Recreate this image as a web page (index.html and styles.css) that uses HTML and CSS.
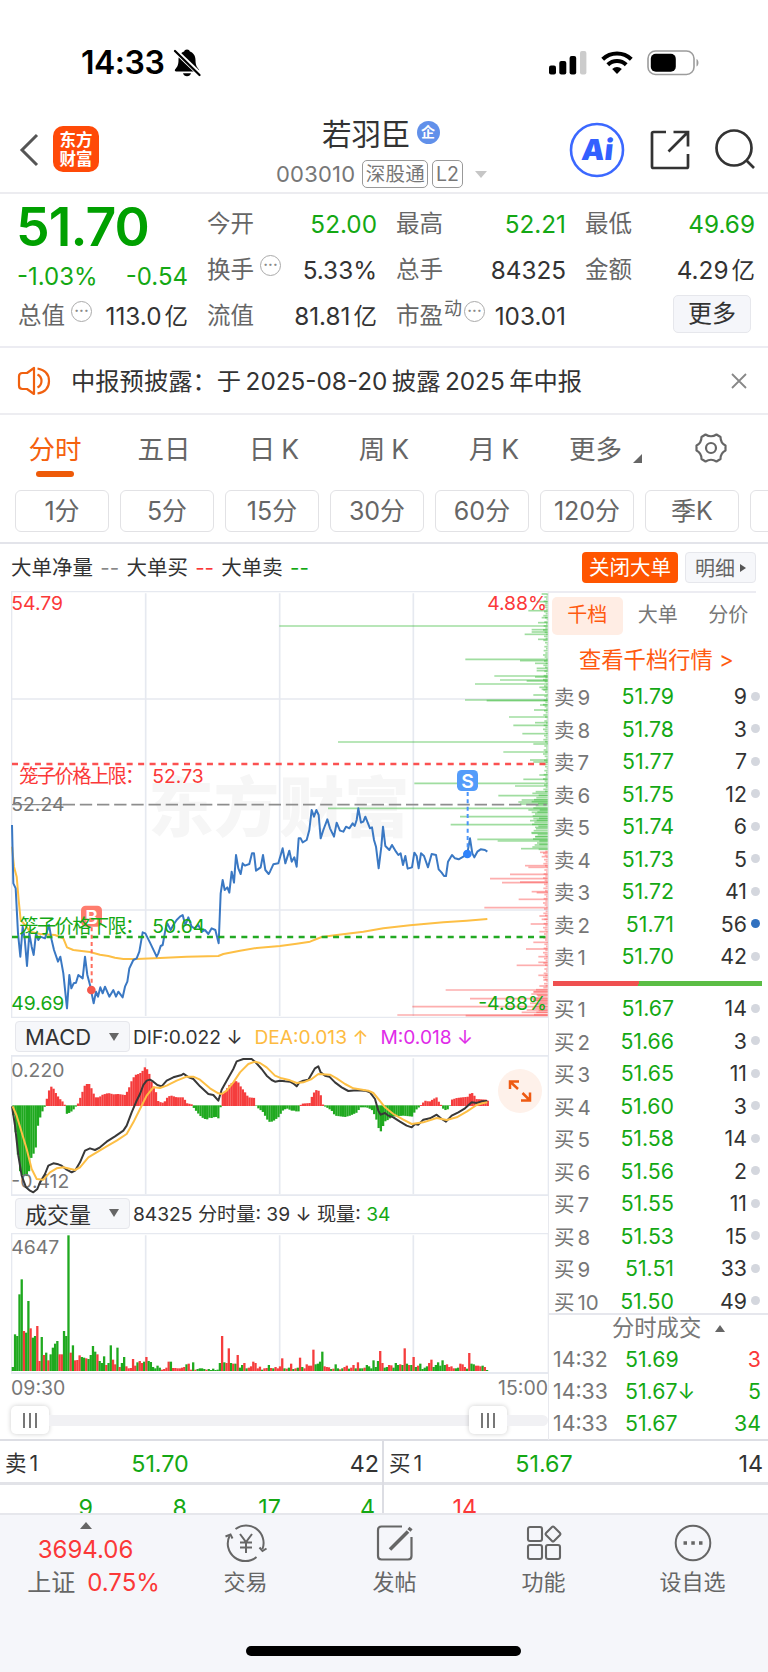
FILE: index.html
```html
<!DOCTYPE html>
<html lang="zh-CN">
<head>
    <meta charset="UTF-8">
    <meta name="viewport" content="width=device-width, initial-scale=1.0">
    <title>若羽臣 003010</title>
    <link rel="stylesheet" href="styles.css">
</head>
<body>
    <div class="status-bar">
        <span class="clock">14:33</span>
        <svg class="bell" width="28" height="30" viewBox="0 0 28 30">
            <path d="M14 1.5c-1.600 0-2.600.9-2.900 2C7.500 4.700 5.500 8 5.500 12c0 5-1.300 7-3.300 9.200-.8 1-.3 2.300 1 2.300h21.600c1.300 0 1.800-1.300 1-2.300-2-2.200-3.300-4.200-3.300-9.200 0-4-2-7.300-5.600-8.500-.3-1.100-1.300-2-2.900-2z"/>
            <path d="M10 25.300h8c-.5 1.900-2 3-4 3s-3.500-1.100-4-3z"/>
            <path d="M2.500 3l24 23" stroke="#fff" stroke-width="5"/>
            <path d="M2 3l24.500 24" stroke="#000" stroke-width="2.200" stroke-linecap="round"/>
        </svg>
        <div class="status-icons">
            <svg width="38" height="25" viewBox="0 0 38 25">
                <rect x="0" y="15.500" width="7" height="9" rx="2"/>
                <rect x="10.300" y="11" width="7" height="13.500" rx="2"/>
                <rect x="20.600" y="6" width="6.600" height="18.500" rx="2"/>
                <rect x="31" y="1" width="6.400" height="23.500" rx="2" fill="#ccc"/>
            </svg>
            <svg width="32" height="25" viewBox="0 0 32 25" fill="none" stroke="#000" stroke-width="4">
                <path d="M1.700 9.300a20.500 20.500 0 0 1 28.600 0"/>
                <path d="M6.800 14.800a13.200 13.200 0 0 1 18.400 0"/>
                <path d="M16 24l-4.800-5a7 7 0 0 1 9.600 0z" fill="#000" stroke="none"/>
            </svg>
            <svg width="54" height="26" viewBox="0 0 54 26">
                <rect x="1" y="1" width="46" height="23.500" rx="7.500" fill="none" stroke="#9c9c9c" stroke-width="1.600"/>
                <rect x="3.800" y="3.800" width="25" height="18" rx="5"/>
                <path d="M49.500 9c2.600 1 2.600 6.500 0 7.500z" fill="#9c9c9c"/>
            </svg>
        </div>
    </div>

    <header>
        <svg class="back" width="20" height="36" viewBox="0 0 20 36"><path d="M18 3L3 18l15 15" fill="none" stroke="#555" stroke-width="3"/></svg>
        <div class="logo">东方<br>财富</div>
        <div class="stock">
            <div class="stock-name">若羽臣<span class="badge">企</span></div>
            <div class="stock-code">003010<span class="tag">深股通</span><span class="tag">L2</span><i class="caret"></i></div>
        </div>
        <div class="head-icons">
            <svg width="56" height="56" viewBox="0 0 56 56">
                <circle cx="28" cy="28" r="26" fill="none" stroke="#3b68ff" stroke-width="2.600"/>
                <text x="27.500" y="38" text-anchor="middle" class="ai-text" transform="skewX(-6) translate(4 0)">Ai</text>
            </svg>
            <svg class="share" width="42" height="42" viewBox="0 0 42 42" fill="none" stroke="#333" stroke-width="2.700">
                <path d="M17 3H4.500Q3 3 3 4.500v33Q3 39 4.500 39h33q1.500 0 1.500-1.500V25"/>
                <path d="M24.500 3H39v14.500M39 3L19.500 22.500"/>
            </svg>
            <svg class="search" width="42" height="42" viewBox="0 0 42 42" fill="none" stroke="#333" stroke-width="2.700">
                <circle cx="20" cy="19" r="17.500"/>
                <path d="M32.500 31.500l7.500 7.500"/>
            </svg>
        </div>
    </header>

    <section class="quote">
        <div class="quote-main">
            <div class="price">51.70</div>
            <div class="change"><span>-1.03%</span><span>-0.54</span></div>
            <div class="cell"><span>总值<i class="more-dot">···</i></span><b>113.0<em>亿</em></b></div>
        </div>
        <div class="quote-col">
            <div class="cell"><span>今开</span><b class="green">52.00</b></div>
            <div class="cell"><span>换手<i class="more-dot">···</i></span><b>5.33%</b></div>
            <div class="cell"><span>流值</span><b>81.81<em>亿</em></b></div>
        </div>
        <div class="quote-col">
            <div class="cell"><span>最高</span><b class="green">52.21</b></div>
            <div class="cell"><span>总手</span><b>84325</b></div>
            <div class="cell"><span>市盈<sup>动</sup><i class="more-dot tight">···</i></span><b>103.01</b></div>
        </div>
        <div class="quote-col">
            <div class="cell"><span>最低</span><b class="green">49.69</b></div>
            <div class="cell"><span>金额</span><b>4.29<em>亿</em></b></div>
            <div class="more-btn">更多</div>
        </div>
    </section>

    <section class="notice">
        <svg width="36" height="30" viewBox="0 0 36 30" fill="none" stroke="#f0600f" stroke-width="2.200" stroke-linejoin="round">
            <path d="M17 2v26l-7-5H5.500Q2 23 2 19.500v-9Q2 7 5.500 7H10z"/>
            <path d="M20.500 8.500q4 2 4 6.500t-4 6.500M20.500 2.500q11.500 2 11.500 12.500t-11.500 12.500" />
        </svg>
        <p>中报预披露：于<i></i>2025-08-20<i></i>披露<i></i>2025<i></i>年中报</p>
        <svg width="18" height="18" viewBox="0 0 18 18" fill="none" stroke="#888" stroke-width="1.800"><path d="M2 2l14 14M16 2L2 16"/></svg>
    </section>

    <nav class="tabs">
        <span class="tab active">分时</span>
        <span class="tab">五日</span>
        <span class="tab">日<i></i>K</span>
        <span class="tab">周<i></i>K</span>
        <span class="tab">月<i></i>K</span>
        <span class="tab tab-more">更多<svg width="9" height="9" viewBox="0 0 9 9"><path d="M9 0v9H0z" fill="#666"/></svg></span>
        <svg class="gear" width="34" height="34" viewBox="0 0 34 34" fill="none" stroke="#666" stroke-width="2.200" stroke-linejoin="round">
            <path d="M11.500 3.500Q17 7 22.500 3.500L26.500 6Q26.500 12 31.500 14.500V19.500Q26.500 22 26.500 28L22.500 30.500Q17 27 11.500 30.500L7.500 28Q7.500 22 2.500 19.500V14.500Q7.500 12 7.500 6z"/>
            <circle cx="17" cy="17" r="5"/>
        </svg>
    </nav>
    <div class="chips">
        <span>1分</span><span>5分</span><span>15分</span><span>30分</span><span>60分</span><span>120分</span><span>季K</span><span></span>
    </div>

    <div class="big-order">
        <p>大单净量 <i class="muted">--</i> 大单买 <i class="red">--</i> 大单卖 <i class="green">--</i></p>
        <div class="btn-close">关闭大单</div>
        <div class="btn-detail">明细<i></i></div>
    </div>

    <main>
        <div class="charts">
            <svg id="price-chart" width="538" height="427" viewBox="33 33 1614 1281">
                <text x="445" y="752" class="watermark">东方财富</text>
                <g class="grid">
                    <path d="M33 34.500H1647M33 1312H1647M35 34V1312M1645 34V1312" stroke-width="4"/>
                    <path d="M33 357H1647M33 990H1647M437 40V1308M839 40V1308M1240 40V1308" stroke-width="5"/>
                </g>
                <g id="profile"></g>
                <g id="price-lines"></g>
                <path d="M36 552H1640" class="dash" stroke="#fb5151"/>
                <path d="M188 674H1640" stroke="#8e8e8e" stroke-width="5" stroke-dasharray="37 14.500"/>
                <path d="M36 674H188" stroke="#8e8e8e" stroke-width="4"/>
                <path d="M36 1071H1640" class="dash" stroke="#22a922"/>
                <rect x="243" y="977" width="63" height="63" rx="14" fill="#ff6e5e" opacity=".9"/>
                <text x="274.500" y="1031" class="mark">B</text>
                <path d="M275 1042V1225" stroke="#ff6e5e" stroke-width="6" stroke-dasharray="12 10"/>
                <circle cx="274" cy="1230" r="13" fill="#f4584c"/>
                <rect x="1371" y="570" width="63" height="63" rx="14" fill="#549cfa"/>
                <text x="1402.500" y="623" class="mark">S</text>
                <path d="M1403 636V815" stroke="#4a94fa" stroke-width="6" stroke-dasharray="12 10"/>
                <circle cx="1402" cy="822" r="13" fill="#2f83fb"/>
                <text x="34" y="91" class="red">54.79</text>
                <text x="1641" y="91" class="red end">4.88%</text>
                <text x="58" y="608" class="red" textLength="375">笼子价格上限：</text>
                <text x="457" y="608" class="red">52.73</text>
                <text x="34" y="692" class="gray">52.24</text>
                <text x="58" y="1059" class="green" textLength="375">笼子价格下限：</text>
                <text x="457" y="1059" class="green">50.64</text>
                <text x="34" y="1291" class="green">49.69</text>
                <text x="1641" y="1291" class="green end">-4.88%</text>
            </svg>

            <div class="indicator">
                <div class="select">MACD<i></i></div>
                <p>DIF:0.022 ↓</p><p class="orange">DEA:0.013 ↑</p><p class="magenta">M:0.018 ↓</p>
            </div>
            <div class="macd-box">
                <svg id="macd-chart" width="538" height="141" viewBox="33 118 1614 423">
                    <g class="grid">
                        <path d="M33 120.500H1647M33 539H1647" stroke-width="6"/>
                        <path d="M35 120V540M1645 120V540" stroke-width="4"/>
                        <path d="M437 128V536M839 128V536M1240 128V536" stroke-width="5"/>
                    </g>
                    <g id="macd-bars"></g>
                    <text x="34" y="183" class="gray">0.220</text>
                    <text x="34" y="516" class="gray">-0.412</text>
                    <g id="macd-lines"></g>
                </svg>
                <div class="expand">
                    <svg width="24" height="24" viewBox="0 0 24 24" fill="none" stroke="#ee5a12" stroke-width="2.500">
                        <path d="M2 10V2.500h9M2.500 3l7.500 7M22 13.500v8H13M21.500 21l-7-7"/>
                    </svg>
                </div>
            </div>

            <div class="indicator vol">
                <div class="select">成交量<i></i></div>
                <p>84325 分时量: 39 ↓ 现量: <b>34</b></p>
            </div>
            <svg id="volume-chart" width="538" height="141" viewBox="33 98 1614 423">
                <g class="grid">
                    <path d="M33 99.500H1647M35 98V520M1645 98V520" stroke-width="4"/>
                    <path d="M33 518H1647" stroke-width="6"/>
                    <path d="M437 105V512M839 105V512M1240 105V512" stroke-width="5"/>
                </g>
                <g id="volume-bars"></g>
                <text x="34" y="160" class="gray">4647</text>
            </svg>
            <div class="times"><span>09:30</span><span>15:00</span></div>
            <div class="slider">
                <div class="handle"><i></i><i></i><i></i></div>
                <div class="track"></div>
                <div class="handle"><i></i><i></i><i></i></div>
                <div class="track end"></div>
            </div>
        </div>

        <aside>
            <div class="book-tabs"><span class="active">千档</span><span>大单</span><span>分价</span></div>
            <div class="book-link">查看千档行情 &gt;</div>
            <div class="book">
                <div class="row"><span>卖<i></i>9</span><b>51.79</b><em>9</em><u></u></div>
                <div class="row"><span>卖<i></i>8</span><b>51.78</b><em>3</em><u></u></div>
                <div class="row"><span>卖<i></i>7</span><b>51.77</b><em>7</em><u></u></div>
                <div class="row"><span>卖<i></i>6</span><b>51.75</b><em>12</em><u></u></div>
                <div class="row"><span>卖<i></i>5</span><b>51.74</b><em>6</em><u></u></div>
                <div class="row"><span>卖<i></i>4</span><b>51.73</b><em>5</em><u></u></div>
                <div class="row"><span>卖<i></i>3</span><b>51.72</b><em>41</em><u></u></div>
                <div class="row"><span>卖<i></i>2</span><b>51.71</b><em>56</em><u class="blue"></u></div>
                <div class="row"><span>卖<i></i>1</span><b>51.70</b><em>42</em><u></u></div>
            </div>
            <div class="ratio"></div>
            <div class="book buy">
                <div class="row"><span>买<i></i>1</span><b>51.67</b><em>14</em><u></u></div>
                <div class="row"><span>买<i></i>2</span><b>51.66</b><em>3</em><u></u></div>
                <div class="row"><span>买<i></i>3</span><b>51.65</b><em>11</em><u></u></div>
                <div class="row"><span>买<i></i>4</span><b>51.60</b><em>3</em><u></u></div>
                <div class="row"><span>买<i></i>5</span><b>51.58</b><em>14</em><u></u></div>
                <div class="row"><span>买<i></i>6</span><b>51.56</b><em>2</em><u></u></div>
                <div class="row"><span>买<i></i>7</span><b>51.55</b><em>11</em><u></u></div>
                <div class="row"><span>买<i></i>8</span><b>51.53</b><em>15</em><u></u></div>
                <div class="row"><span>买<i></i>9</span><b>51.51</b><em>33</em><u></u></div>
                <div class="row"><span>买<i></i>10</span><b>51.50</b><em>49</em><u></u></div>
            </div>
            <div class="deals">
                <h3>分时成交<i></i></h3>
                <div class="deal"><span>14:32</span><b>51.69</b><em class="red">3</em></div>
                <div class="deal"><span>14:33</span><b>51.67↓</b><em class="green">5</em></div>
                <div class="deal"><span>14:33</span><b>51.67</b><em class="green">34</em></div>
            </div>
        </aside>
    </main>

    <section class="level1">
        <div class="half">
            <div class="best"><span>卖<i></i>1</span><b>51.70</b><em>42</em></div>
            <div class="queue"><span>9</span><span>8</span><span>17</span><span>4</span></div>
        </div>
        <div class="half">
            <div class="best"><span>买<i></i>1</span><b>51.67</b><em>14</em></div>
            <div class="queue red"><span>14</span><span></span><span></span><span></span></div>
        </div>
    </section>

    <footer>
        <div class="menu">
            <div class="index">
                <i></i>
                <p>3694.06</p>
                <p class="index-name"><span>上证</span>0.75%</p>
            </div>
            <div class="item">
                <svg width="44" height="40" viewBox="0 0 44 40" fill="none" stroke="#666" stroke-width="2">
                    <path d="M11.500 6A17.500 17.500 0 0 1 38.500 26M32.500 34A17.500 17.500 0 0 1 5.500 13"/>
                    <path d="M1.500 13.500l5-2 2 4M42.500 25.500l-4 2.500-3-3.500"/>
                    <path d="M16 11l6 8 6-8M22 19v11M16 19.500h12M16 24.500h12"/>
                </svg>
                <p>交易</p>
            </div>
            <div class="item">
                <svg width="44" height="40" viewBox="0 0 44 40" fill="none" stroke="#666" stroke-width="2.200">
                    <path d="M29 3.500H8.500Q5 3.500 5 7v26q0 3.500 3.500 3.500h26.500q3.500 0 3.500-3.500V14"/>
                    <path d="M17 26.500L35 8.500" stroke-width="3.600"/>
                    <path d="M36 7.500l2-2.500" stroke-width="4"/>
                </svg>
                <p>发帖</p>
            </div>
            <div class="item">
                <svg width="44" height="40" viewBox="0 0 44 40" fill="none" stroke="#666" stroke-width="2.100">
                    <rect x="6" y="4" width="14" height="14" rx="2"/>
                    <rect x="6" y="22" width="14" height="14" rx="2"/>
                    <rect x="24" y="22" width="14" height="14" rx="2"/>
                    <path d="M30 4q1-1 2 0l6 6q1 1 0 2l-6 6q-1 1-2 0l-6-6q-1-1 0-2z"/>
                </svg>
                <p>功能</p>
            </div>
            <div class="item">
                <svg width="44" height="40" viewBox="0 0 44 40" fill="none" stroke="#666" stroke-width="2">
                    <circle cx="22" cy="20" r="17.300"/>
                    <path d="M12.500 20h3.500M20.300 20h3.500M28 20h3.500" stroke-width="3.400"/>
                </svg>
                <p>设自选</p>
            </div>
        </div>
        <div class="home-bar"></div>
    </footer>
    <script src="charts.js"></script>
</body>
</html>
```

FILE: styles.css
```css
* {
    box-sizing: border-box;
}
body {
    margin: 0;
    width: 768px;
    height: 1672px;
    overflow: hidden;
    background: #fff;
    color: #333;
    font-family: Inter, "Noto Sans CJK SC", sans-serif;
    font-size: 24px;
}
p, h3 {
    margin: 0;
    font-weight: 400;
}
i, em {
    font-style: normal;
}
b {
    font-weight: 400;
}
u {
    text-decoration: none;
}
svg {
    display: block;
    flex: none;
}
.red {
    color: #fb3838;
    fill: #fb3838;
}
.green {
    color: #14a814;
    fill: #14a814;
}
.gray {
    fill: #777;
}
.muted {
    color: #888;
}
.orange {
    color: #fdbb41;
}
.magenta {
    color: #e02ce8;
}

/* status bar */
.status-bar {
    display: flex;
    align-items: center;
    height: 108px;
    padding: 17px 67px 0 81px;
}
.clock {
    font-size: 32px;
    font-weight: 600;
    letter-spacing: -0.5px;
    color: #000;
    width: 92px;
    white-space: nowrap;
}
.status-icons {
    display: flex;
    align-items: center;
    gap: 14px;
    margin-left: auto;
}

/* header */
header {
    display: flex;
    height: 86px;
    border-bottom: 2px solid #ececf0;
    padding-left: 19px;
}
.back {
    margin: 24px 14px 0 0;
}
.logo {
    width: 46px;
    height: 46px;
    margin-top: 18px;
    padding-top: 4px;
    border-radius: 10px;
    background: #ff4a08;
    color: #fff;
    font-family: "Noto Sans CJK SC", sans-serif;
    font-weight: 700;
    font-size: 16.500px;
    line-height: 19px;
    text-align: center;
}
.stock {
    width: 304px;
    flex: none;
    margin-left: 128px;
    padding-left: 50px;
}
.stock-name {
    display: flex;
    align-items: center;
    height: 36px;
    margin-top: 6px;
    padding-left: 45px;
    font-size: 29.500px;
}
.badge {
    width: 23px;
    height: 23px;
    margin-left: 6px;
    border-radius: 50%;
    background: #6190ea;
    color: #fff;
    font-size: 14px;
    font-weight: 700;
    line-height: 22px;
    text-align: center;
}
.stock-code {
    display: flex;
    align-items: center;
    height: 30px;
    margin-top: 9px;
    margin-left: -1px;
    white-space: nowrap;
    font-size: 22px;
    letter-spacing: 0.200px;
    color: #777;
}
.tag {
    height: 28px;
    margin-left: 4px;
    padding: 0 2.500px;
    border: 1.500px solid #999;
    border-radius: 5px;
    font-size: 19.500px;
    line-height: 26px;
}
.tag:first-of-type {
    margin-left: 7px;
}
.caret {
    margin-left: 12px;
    border: 6.500px solid transparent;
    border-top: 7px solid #c6c6c6;
    border-bottom: 0;
}
.head-icons {
    display: flex;
    margin: 14px 0 0 38px;
}
.share {
    margin: 7px 0 0 24px;
}
.search {
    margin: 7px 0 0 23px;
}

/* quote */
.quote {
    display: flex;
    height: 154px;
    border-bottom: 2px solid #ececf2;
}
.quote-main {
    width: 188px;
    padding-left: 18px;
}
.price {
    height: 67px;
    line-height: 66px;
    margin-left: -2px;
    font-size: 53.500px;
    font-weight: 600;
    letter-spacing: -0.900px;
    color: #00a000;
}
.change {
    display: flex;
    justify-content: space-between;
    height: 34px;
    line-height: 34px;
    margin: -1px 0 0 -1px;
    color: #14a814;
}
.quote-main .cell {
    margin-top: -1px;
}
.quote-col {
    width: 170px;
    margin-left: 19px;
    padding-top: 7px;
}
.quote-main + .quote-col {
    width: 170px;
}
.cell {
    display: flex;
    justify-content: space-between;
    height: 46px;
    line-height: 46px;
    white-space: nowrap;
}
.cell span {
    display: flex;
    color: #666;
    font-size: 23.500px;
}
.cell b {
    font-size: 24.300px;
}
.cell em {
    margin-left: 3px;
    font-size: 23.500px;
}
.cell sup {
    font-size: 18px;
    line-height: 32px;
    margin-left: 1px;
}
.more-dot {
    width: 21px;
    height: 21px;
    margin: 8px 0 0 6px;
    border: 1.500px solid #aaa;
    border-radius: 50%;
    font-size: 15px;
    font-weight: 600;
    line-height: 17px;
    text-align: center;
    color: #888;
}
.more-dot.tight {
    margin-left: 2px;
}
.more-btn {
    width: 78px;
    height: 38px;
    margin: 2px 0 0 88px;
    border: 1.500px solid #e6e7ec;
    border-radius: 5px;
    background: #f5f6fa;
    line-height: 36px;
    text-align: center;
    font-size: 24px;
}

/* notice */
.notice {
    display: flex;
    align-items: center;
    height: 67px;
    padding: 0 20px 0 17px;
    border-bottom: 2px solid #ededf1;
}
.notice p {
    flex: 1;
    margin: -2px 0 0 18px;
    font-size: 24.300px;
    white-space: nowrap;
}
.notice i {
    margin-left: 4.500px;
}

/* period tabs */
.tabs {
    display: flex;
    height: 75px;
    padding-top: 14px;
    color: #666;
    font-size: 26.500px;
    line-height: 40px;
}
.tab {
    display: block;
    width: 110px;
    margin-left: -1px;
    margin-right: 1px;
    text-align: center;
    white-space: nowrap;
}
.tab i {
    margin-left: 6px;
}
.tab.active {
    margin-left: 0;
    margin-right: 0;
    color: #f5610e;
}
.tab.active::after {
    content: "";
    display: block;
    width: 38px;
    height: 6px;
    margin: 2px auto 0;
    border-radius: 3px;
    background: #ee5a08;
}
.tab-more {
    display: flex;
    align-items: flex-end;
    height: 40px;
    padding-left: 20px;
}
.tab-more svg {
    margin: 0 0 6px 11px;
}
.gear {
    margin: 2px 0 0 34px;
}
.chips {
    display: flex;
    gap: 11px;
    height: 54px;
    padding-left: 15px;
    overflow: hidden;
    border-bottom: 2px solid #e3e4ea;
}
.chips span {
    flex: none;
    width: 94px;
    height: 42px;
    border: 1.500px solid #e2e2e5;
    border-radius: 6px;
    color: #666;
    font-size: 25px;
    line-height: 41px;
    text-align: center;
}

/* big orders */
.big-order {
    display: flex;
    height: 47px;
    padding: 8px 12px 0 11px;
    font-size: 20.500px;
}
.big-order p {
    flex: 1;
    line-height: 31px;
    word-spacing: 1.500px;
}
.btn-close {
    width: 96px;
    height: 31px;
    border-radius: 4px;
    background: #ff5500;
    color: #fff;
    line-height: 31px;
    text-align: center;
}
.btn-detail {
    display: flex;
    justify-content: center;
    align-items: center;
    width: 71px;
    height: 31px;
    margin-left: 7px;
    border: 1.500px solid #e6e7ec;
    border-radius: 4px;
    background: #f6f7fa;
    color: #666;
    font-size: 20px;
}
.btn-detail i {
    margin-left: 5px;
    border: 4px solid transparent;
    border-left: 6px solid #555;
    border-right: 0;
}

/* charts */
main {
    display: grid;
    grid-template-columns: 548px 220px;
    height: 850px;
    border-bottom: 2px solid #dddee4;
}
.charts {
    padding-left: 11px;
}
.grid path {
    fill: none;
    stroke: #e6e9f0;
}
.charts text {
    font-size: 58px;
}
.charts .end {
    text-anchor: end;
}
.charts .watermark {
    font-size: 196px;
    font-weight: 900;
    fill: #f6f6f6;
}
.charts .mark {
    font-weight: 600;
    fill: #fff;
    text-anchor: middle;
}
.dash {
    stroke-width: 8;
    stroke-dasharray: 18 16.400;
}
.head-icons .ai-text {
    font-size: 29px;
    font-weight: 900;
    fill: #3360ff;
}
.indicator {
    display: flex;
    align-items: center;
    height: 37px;
    padding-left: 4px;
    font-size: 19.200px;
    white-space: nowrap;
}
.indicator p {
    margin-right: 12px;
}
.indicator b {
    color: #14a814;
}
.indicator.vol {
    padding-bottom: 3px;
}
.select {
    display: flex;
    align-items: center;
    justify-content: space-between;
    width: 115px;
    height: 31px;
    margin-right: 3px;
    padding: 0 10px 0 9px;
    border: 1.500px solid #e6e7ec;
    border-radius: 4px;
    background: #f6f7fa;
    font-size: 22px;
}
.select i {
    border: 5px solid transparent;
    border-top: 8px solid #666;
    border-bottom: 0;
}
.macd-box {
    position: relative;
}
.expand {
    position: absolute;
    left: 487px;
    top: 14px;
    display: flex;
    align-items: center;
    justify-content: center;
    width: 44px;
    height: 44px;
    border-radius: 50%;
    background: #fef1ea;
}
.times {
    display: flex;
    justify-content: space-between;
    height: 28px;
    line-height: 29px;
    font-size: 19.500px;
    color: #777;
}
.slider {
    display: flex;
    align-items: center;
    height: 36px;
}
.handle {
    display: flex;
    justify-content: center;
    align-items: center;
    gap: 4px;
    width: 38px;
    height: 28px;
    border-radius: 5px;
    background: #fff;
    box-shadow: 0 0 5px rgba(0, 0, 0, 0.2);
}
.handle i {
    width: 2px;
    height: 15px;
    background: #777;
}
.track {
    width: 420px;
    height: 11px;
    background: #f1f1f4;
}
.track.end {
    width: 41px;
    border-radius: 0 6px 6px 0;
}

/* order book */
aside {
    border-left: 1px solid #e8e9ee;
    font-size: 21.300px;
}
.book-tabs {
    display: flex;
    height: 43px;
    margin-right: 12px;
    padding: 4px 0 0 3px;
    border-top: 2px solid #ececf2;
    color: #777;
    font-size: 20px;
}
.book-tabs span {
    width: 70.500px;
    height: 38px;
    border-radius: 5px;
    line-height: 37px;
    text-align: center;
    flex: none;
}
.book-tabs .active {
    background: #ffede4;
    color: #ff5a10;
}
.book-link {
    height: 46px;
    padding-left: 30px;
    color: #ff5a10;
    font-size: 22.300px;
    line-height: 51px;
    white-space: nowrap;
}
.row {
    display: flex;
    align-items: center;
    height: 32.500px;
    padding-left: 5px;
}
.row span {
    width: 57px;
    color: #777;
    font-size: 20.500px;
    white-space: nowrap;
}
.row span i {
    margin-left: 3px;
}
.row b {
    width: 63px;
    color: #14a814;
    text-align: right;
}
.row em {
    width: 73px;
    text-align: right;
}
.row u {
    width: 9px;
    height: 9px;
    margin-left: 4px;
    border-radius: 50%;
    background: #d4d7de;
}
.row .blue {
    background: #3071c0;
}
.ratio {
    width: 209px;
    height: 5px;
    margin: 8.500px 0 6px 4px;
    background: linear-gradient(110deg, #ef5050 41%, #5bbd45 41%);
}
.book.buy {
    height: 321px;
}
.deals {
    border-top: 2px solid #e6e7ed;
}
.deals h3 {
    display: flex;
    align-items: center;
    height: 28px;
    padding-left: 63px;
    font-size: 22.300px;
    line-height: 26px;
    padding-bottom: 2px;
    color: #777;
}
.deals h3 i {
    margin-left: 14px;
    border: 5px solid transparent;
    border-bottom: 7px solid #666;
    border-top: 0;
}
.deal {
    display: flex;
    height: 32.200px;
    line-height: 32px;
    padding: 0 7px 0 4px;
}
.deal span {
    width: 72px;
    color: #777;
}
.deal b {
    flex: 1;
    color: #14a814;
}

/* level 1 */
.level1 {
    display: grid;
    grid-template-columns: 1fr 1fr;
    height: 72px;
    overflow: hidden;
    font-size: 23.300px;
}
.half + .half {
    border-left: 2px solid #dcdde3;
    margin-left: -2px;
}
.best {
    display: grid;
    grid-template-columns: 1fr 1fr 1fr;
    height: 44px;
    padding: 0 5px;
    border-bottom: 3px solid #e2e3e8;
    line-height: 45px;
}
.best span {
    font-size: 21.500px;
}
.best span i {
    margin-left: 3px;
}
.best b {
    color: #14a814;
    text-align: center;
    padding-right: 64px;
}
.best em {
    text-align: right;
}
.queue {
    display: grid;
    grid-template-columns: repeat(4, 94px);
    line-height: 46px;
    color: #14a814;
    text-align: right;
    margin-left: -1px;
}
.queue.red {
    color: #fb3838;
}

/* footer */
footer {
    height: 159px;
    border-top: 2px solid #e6e7ec;
    background: #f5f6fa;
}
.menu {
    display: flex;
    height: 131px;
}
.index {
    width: 171px;
    padding-top: 7px;
    text-align: center;
    color: #fb3838;
    line-height: 33px;
    font-size: 24px;
}
.index i {
    display: block;
    width: 0;
    margin: 0 auto 4px;
    border: 6.500px solid transparent;
    border-bottom: 7px solid #666;
    border-top: 0;
}
.index-name {
    padding-left: 16px;
}
.index span {
    margin-right: 12px;
    color: #666;
}
.item {
    display: flex;
    flex-direction: column;
    align-items: center;
    width: 149px;
    padding-top: 8px;
    color: #666;
    font-size: 22px;
}
.item p {
    margin-top: 3px;
    line-height: 32px;
}
.home-bar {
    width: 275px;
    height: 10px;
    margin-left: 246px;
    border-radius: 5px;
    background: #000;
}
```

FILE: charts.js
```js
const RED = '#f53d3d';
const GREEN = '#1fa91f';
const NS = 'http://www.w3.org/2000/svg';

// the second half of every series starts at this offset
const HALF = 810;

function add(parent, tag, attrs) {
    const el = document.createElementNS(NS, tag);
    for (const key in attrs) el.setAttribute(key, attrs[key]);
    document.getElementById(parent).appendChild(el);
}

function parse(am, pm) {
    const read = (str, dx) => str.trim().split(/\s+/).map(p => {
        const [x, y] = p.split(',').map(Number);
        return [x + dx, y];
    });
    return read(am, 0).concat(read(pm, HALF));
}

function line(parent, points, color, width) {
    add(parent, 'polyline', {
        points: points.map(p => p.join(',')).join(' '),
        fill: 'none', stroke: color, 'stroke-width': width, 'stroke-linejoin': 'round'
    });
}

// average price
line('price-lines', parse(
    `36,800 42,860 50,890 56,960 62,1020 75,1035 90,1055 120,1062 165,1065 190,1075 201,1102 220,1110
     270,1116 300,1124 325,1128 345,1133 370,1137 410,1137 480,1134 560,1130 655,1128 670,1122 720,1112 770,1104`,
    `30,1098 80,1091 120,1085 155,1071 200,1065 280,1055 340,1045 420,1036 520,1027 590,1022 652,1017`
), '#fdbf45', 6);

// price
line('price-lines', parse(
    `36,735 40,910 47,925 54,1060 61,1130 68,1040 74,1075 81,1158 88,1060 95,1100 101,1125 108,1060 115,1080
     121,1070 135,1075 147,1035 155,1080 162,1110 174,1145 181,1130 190,1180 201,1285 208,1185 214,1225 221,1210
     228,1208 235,1185 248,1195 255,1130 262,1185 270,1215 281,1270 288,1235 294,1250 301,1222 308,1240 315,1220
     328,1250 340,1230 348,1250 355,1235 368,1252 375,1220 382,1205 388,1165 400,1140 410,1135 418,1115 428,1057
     436,1060 450,1088 470,1130 475,1120 482,1098 488,1095 497,1045 502,1030 512,1050 520,1035 530,1020 540,1010
     548,1005 556,1035 565,1012 575,1040 584,1045 595,1035 605,1055 615,1050 625,1062 635,1045 646,1050 656,1090
     662,940 668,900 674,930 682,922 688,938 695,875 702,908 708,825 715,865 722,882 728,850 735,857 748,852
     756,820 762,820 768,872 782,862 789,825 796,870 806,882`,
    `0,875 10,853 25,850 38,805 46,850 58,812 65,845 73,832 80,860 86,775 92,775 98,787 110,780 118,750 125,690
     132,710 139,690 146,705 152,775 160,750 172,718 180,745 192,770 200,728 210,752 220,755 228,740 238,745
     248,730 254,738 260,720 265,685 273,728 280,725 286,710 300,745 306,742 312,780 318,800 326,865 334,800
     339,740 346,798 358,810 366,795 378,815 385,825 392,820 399,855 406,828 413,866 426,862 433,818 440,828
     446,865 453,820 462,828 474,862 485,822 498,825 506,868 515,878 522,888 528,888 534,845 546,825 555,835
     566,838 580,830 592,820 600,775 607,820 613,832 622,815 632,808 645,810 652,815`
), '#3a78c3', 6);

// volume by price: y, left end
const profile = [
    [42,815],[65,800],[92,775],[113,815],[128,804],[138,28],[149,785],[156,785],[163,764],[178,804],[238,586],
    [242,750],[250,795],[265,800],[272,800],[288,673],[291,795],[300,690],[303,770],[312,615],[322,808],[328,815],
    [345,790],[360,585],[362,650],[375,810],[390,792],[411,717],[428,795],[436,730],[461,757],[486,204],[492,790],
    [516,700],[540,780],[546,790],[585,808],[598,760],[610,433],[618,735],[635,797],[647,685],[660,755],[666,745],
    [672,750],[685,174],[690,775],[697,785],[710,570],[716,790],[722,780],[734,542],[742,795],[760,785],[770,795],
    [778,622],[783,683],[793,808],[806,753],[817,810],[830,815],[857,765],[862,775],[883,720],[896,660],[908,696],
    [906,750],[935,785],[938,800],[958,746],[983,643],[1008,808],[1018,815],[1032,782],[1055,808],[1087,790],
    [1107,768],[1130,805],[1147,805],[1156,740],[1186,805],[1200,820],[1218,808],[1230,527],[1236,790],[1245,800],
    [1256,600],[1262,790],[1270,780],[1280,427],[1290,770],[1297,755],[1305,382],[1307,587]
];
function profileBar(y, x) {
    add('profile', 'path', {
        d: `M${x + HALF} ${y}H1643`, 'stroke-width': 5,
        stroke: y < 812 ? '#1fb01f' : '#fb4040', opacity: 0.42
    });
}
profile.forEach(p => profileBar(p[0], p[1]));
for (let y = 45, i = 0; y < 1305; y += 6.200, i++) {
    const dense = (y > 640 && y < 812) || y > 1225;
    profileBar(Math.round(y), 833 - (dense ? 24 : 3) - (i * 7) % (dense ? 26 : 12));
}

// MACD histogram outline, sampled into bars around the zero line
const ZERO = 270;
const outline = parse(
    `36,270 45,330 55,430 62,478 85,482 92,430 100,415 107,400 108,355 115,325 122,300 128,285 135,271 136,262
     142,245 150,213 158,213 163,225 172,240 180,250 192,262 195,270 201,296 210,290 218,285 225,275 230,270
     235,262 245,235 256,205 268,205 280,230 283,245 298,245 305,238 325,232 340,236 355,235 375,238 385,222
     395,195 405,178 415,175 425,170 435,154 445,165 455,200 462,215 468,230 475,258 492,262 498,250 505,242
     515,240 530,245 552,245 558,262 575,266 580,275 590,288 600,300 610,308 620,312 630,305 637,308 645,302
     655,308 660,290 662,270 668,235 680,220 690,205 700,200 712,195 720,210 735,230 745,245 765,247 768,270
     775,278 790,290 800,310`,
    `0,320 10,316 25,305 38,285 50,278 65,285 78,285 82,298 86,285 90,270 95,264 120,262 128,235 140,222
     150,228 156,258 160,270 170,275 185,285 195,300 210,302 225,304 240,300 262,290 270,275 290,275 305,282
     315,300 322,320 328,347 338,347 340,320 355,312 365,303 400,300 428,303 435,285 450,272 455,265 465,255
     478,258 490,250 500,245 508,262 515,270 520,280 530,285 535,278 540,270 545,252 560,247 595,243 602,230
     612,235 615,250 650,252 660,262`
);
for (let x = 37; x < 1466; x += 6.680) {
    const mid = x + 3.300;
    const k = outline.findIndex(p => p[0] >= mid);
    if (k < 1) continue;
    const [x0, y0] = outline[k - 1];
    const [x1, y1] = outline[k];
    const y = y0 + (y1 - y0) * (mid - x0) / (x1 - x0);
    add('macd-bars', 'rect', {
        x: x, y: Math.min(y, ZERO - 1), width: 6.900,
        height: Math.abs(y - ZERO) + 1, fill: y < ZERO ? RED : GREEN
    });
}

// DIF
line('macd-lines', parse(
    `36,272 45,330 55,420 65,480 78,515 90,525 100,530 112,520 120,500 135,475 145,450 160,443 175,446 185,450
     200,462 215,470 225,465 240,440 255,405 270,398 285,403 300,395 320,378 345,362 370,345 380,330 395,290
     410,255 420,235 430,208 440,195 450,192 460,198 472,208 485,212 500,195 520,185 545,178 550,174 565,184
     580,190 600,212 625,235 640,238 655,255 665,222 680,195 700,160 710,137 730,130 755,130 765,138 785,160
     800,180`,
    `5,193 15,198 30,195 45,197 60,198 72,205 80,212 88,200 100,195 115,192 125,175 135,158 145,152 152,170
     165,180 178,183 195,200 215,215 235,226 260,224 285,225 300,230 315,250 325,285 332,297 345,292 355,300
     370,305 390,318 410,330 425,335 435,325 445,327 460,312 480,308 500,297 515,310 528,318 545,300 565,290
     585,278 605,260 620,262 635,257 652,256`
), '#383838', 6);

// DEA
line('macd-lines', parse(
    `38,272 50,300 65,350 80,400 95,460 110,490 130,492 150,470 170,458 190,455 225,463 240,455 265,425 290,410
     320,392 350,375 380,355 400,320 420,280 440,240 460,215 480,217 500,210 530,195 560,183 580,183 600,192
     630,218 655,233 665,235 680,225 700,200 720,170 745,145 765,138 780,142 800,155`,
    `0,165 15,180 35,188 60,194 80,202 100,200 125,190 145,175 180,177 200,188 225,205 250,218 295,225 310,232
     325,250 345,275 370,295 400,312 425,325 460,320 500,307 530,313 560,305 590,288 620,268 640,262 652,260`
), '#fdbf45', 6);

// minute volume, positive = up (red), negative = down (green)
const volume = [
    -12,-110,-105,-230,-275,120,-115,-210,128,-100,-105,135,30,-102,48,-55,32,-50,-70,-82,-90,50,50,-120,-105,
    -407,55,-77,32,33,47,-42,-40,38,-36,-48,-75,-58,50,-30,-24,-44,18,-24,-77,34,20,-70,12,-24,-42,14,8,9,36,
    16,-26,30,24,-28,42,-30,-27,-12,-8,-16,-10,4,6,10,28,-28,9,9,8,8,10,12,-20,22,4,-26,4,-6,-8,-8,-6,4,-6,-3,
    -7,-3,-4,-24,105,-26,24,68,-24,22,-22,48,-10,-18,24,-8,10,14,28,24,8,13,-4,8,9,-18,9,-8,12,8,14,38,-8,7,
    -10,22,-6,8,-10,40,-12,8,20,16,16,64,-20,-22,-28,-58,14,12,11,-6,7,-20,-8,5,-8,12,16,-7,10,18,-8,26,-8,-8,
    10,-18,-14,-8,-32,-12,-30,60,24,-10,-12,18,17,-10,-24,-18,20,-18,68,-22,18,-18,42,-12,16,-22,-6,-10,-14,24,
    34,-12,-18,-26,-16,-32,-18,20,12,14,8,-8,-10,22,20,12,-7,54,-22,-20,16,16,14,-16,12,-3
];
volume.forEach((v, i) => {
    const h = Math.abs(v);
    add('volume-bars', 'rect', { x: 35 + i * 6.680, y: 512 - h, width: 6.900, height: h, fill: v > 0 ? RED : GREEN });
});
```
